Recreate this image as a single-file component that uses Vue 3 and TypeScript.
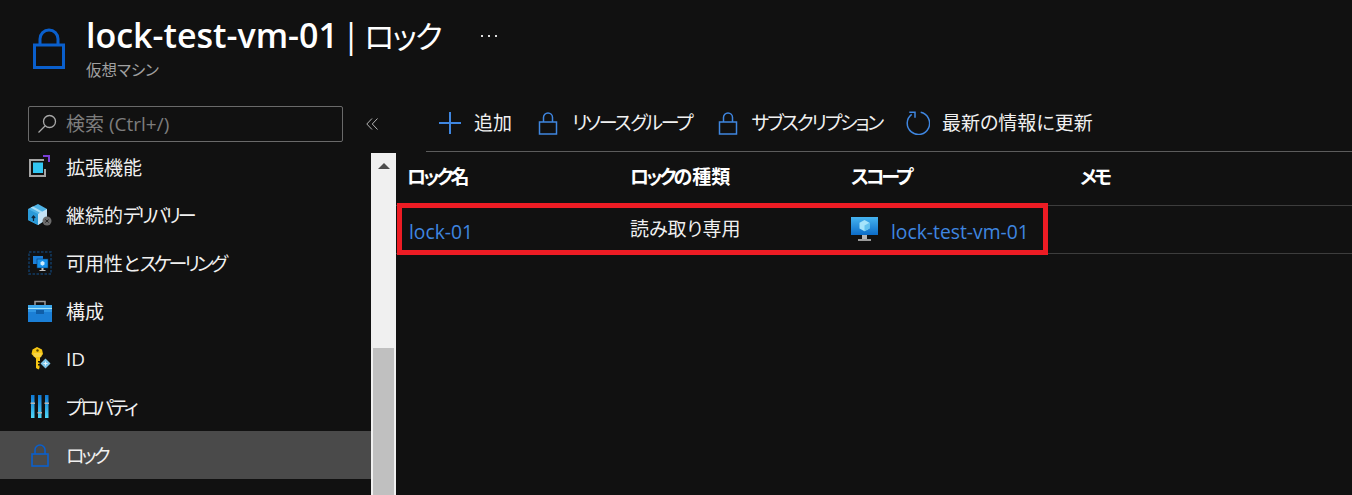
<template>
  <div class="page">
    <header class="head">
      <svg class="head-lock" viewBox="0 0 32 42" fill="none" stroke="#0a5fcc" stroke-width="3">
        <path d="M7 18V12a9 9 0 0 1 18 0v6" />
        <rect x="1.5" y="18" width="29" height="22.5" />
      </svg>
      <div class="head-text">
        <div class="title-row">
          <h1 class="title">lock-test-vm-01 <span class="title-bar">|</span> <span class="title-kana">ロック</span></h1>
          <svg class="more" width="16" height="3" viewBox="0 0 16 3" fill="#ddd">
            <rect x="0" y="1" width="2" height="2" />
            <rect x="7" y="1" width="2" height="2" />
            <rect x="14" y="1" width="2" height="2" />
          </svg>
        </div>
        <div class="subtitle">仮想マシン</div>
      </div>
    </header>

    <div class="body">
      <aside class="side">
        <div class="search-row">
          <div class="search">
            <svg class="search-icon" viewBox="0 0 20 20" fill="none" stroke="#a8a8a8" stroke-width="1.3">
              <circle cx="12.5" cy="7.5" r="6" />
              <path d="M8 12 1.5 18.5" />
            </svg>
            <span>検索 (Ctrl+/)</span>
          </div>
          <svg class="collapse" width="12" height="12" viewBox="0 0 12 12" fill="none" stroke="#b5b5b5" stroke-width="1">
            <path d="M6 .5.8 6 6 11.500M11.500 .5 6.300 6l5.200 5.500" />
          </svg>
        </div>
        <div class="nav-wrap">
          <nav class="nav">
            <a v-for="item in items" :key="item.label" class="nav-item" :class="{ 'is-active': item.active }">
              <span class="nav-icon">
                <svg v-if="item.icon === 'ext'" width="24" height="24" viewBox="0 0 24 24">
                  <path d="M1 4h15v2H3v14h13v-6h2v8H1z" fill="#a5a5a5" />
                  <path d="M15 0h7v7h-2V2h-5z" fill="#7b3fd6" />
                  <rect x="5" y="7.500" width="10" height="10.500" fill="#32c6f2" />
                </svg>
                <svg v-else-if="item.icon === 'pkg'" width="24" height="24" viewBox="0 0 24 24">
                  <path d="M0 6l10-5 9 5v10l-9 6-10-5z" fill="#4fb3e6" />
                  <path d="M0 6l10 5v11l-10-5z" fill="#2a9ad8" />
                  <path d="M5 3.500l9 5v3l-2.500 1v-3l-9-5z" fill="#a8def6" />
                  <path d="M5.500 18v-5M3.800 15 5.500 13l1.700 2" stroke="#10283c" stroke-width="1.200" fill="none" />
                  <path d="M10 11l9-5v10l-9 6z" fill="#c4e2f4" />
                  <circle cx="19" cy="18" r="4.500" fill="#6c6c6c" />
                  <path d="M17.300 16.500l3.400 3M20.700 16.500l-3.400 3" stroke="#222" stroke-width="1" />
                </svg>
                <svg v-else-if="item.icon === 'scale'" width="24" height="24" viewBox="0 0 24 24">
                  <rect x="1" y="1" width="22" height="22" fill="none" stroke="#123c66" stroke-width="1.500" stroke-dasharray="2.500 1.500" />
                  <rect x="5" y="5" width="10" height="8" fill="#1c7fd8" />
                  <rect x="9" y="8" width="11" height="9" fill="#1690ea" stroke="#0b3a66" stroke-width=".6" />
                  <path d="M14.500 10l2 1.200v2.300l-2 1.200-2-1.200v-2.300z" fill="#cfeeff" />
                  <path d="M13.500 17h2v2h2v1h-6v-1h2z" fill="#c4c4c4" />
                </svg>
                <svg v-else-if="item.icon === 'tool'" width="24" height="24" viewBox="0 0 24 24">
                  <path d="M7 6V2.500h10V6" fill="none" stroke="#9a9a9a" stroke-width="1.500" />
                  <rect x="0" y="6" width="24" height="17" fill="#1b7fd6" />
                  <rect x="0" y="6" width="24" height="3" fill="#3ba7ec" />
                  <rect x="0" y="9" width="24" height="1.300" fill="#a5e4f8" />
                  <path d="M0 10.300h24V13H0z" fill="#2f96e4" />
                  <rect x="8" y="11" width="8" height="4" fill="#0f5ea8" />
                </svg>
                <svg v-else-if="item.icon === 'key'" width="24" height="24" viewBox="0 0 24 24">
                  <path d="M9 0l5 2.500 1 4.500-3 4v3h-2v1.500h1.500V17H10v1.500h1.500V21l-1 1.500L8 21V11.500L3.500 7l1-4.500z" fill="#f6c613" />
                  <circle cx="9.500" cy="3.500" r="1.200" fill="#5a4700" />
                  <path d="M5.500 7h8M5.500 9h8" stroke="#fbe98c" stroke-width=".8" />
                  <path d="M17.500 11.500l5 5-5 5-5-5z" fill="#7ec6ea" />
                  <path d="M15.500 16.500h4M17.500 14.500v4" stroke="#e7f7ff" stroke-width="1" />
                </svg>
                <svg v-else-if="item.icon === 'prop'" width="24" height="24" viewBox="0 0 24 24">
                  <defs>
                    <linearGradient id="bar" x1="0" y1="0" x2="0" y2="1">
                      <stop offset="0" stop-color="#0f78d4" />
                      <stop offset="1" stop-color="#4fd8f8" />
                    </linearGradient>
                  </defs>
                  <rect x="3" y="0" width="3.500" height="23" fill="url(#bar)" />
                  <rect x="10" y="0" width="3.500" height="23" fill="url(#bar)" />
                  <rect x="17" y="0" width="3.500" height="23" fill="url(#bar)" />
                  <rect x="2.500" y="7.500" width="4.500" height="1.500" fill="#b5b5b5" />
                  <rect x="9.500" y="17" width="4.500" height="1.500" fill="#b5b5b5" />
                  <rect x="16.500" y="7.500" width="4.500" height="1.500" fill="#b5b5b5" />
                </svg>
                <svg v-else width="24" height="24" viewBox="0 0 24 24" fill="none" stroke="#0a5fcc" stroke-width="1.600">
                  <path d="M7 11V7a5 5 0 0 1 10 0v4" />
                  <rect x="4" y="11" width="16" height="12" />
                </svg>
              </span>
              <span><span v-for="run in runs(item.label)" :key="run.text" :class="{ kana: run.kana }">{{ run.text }}</span></span>
            </a>
          </nav>
          <div class="scrollbar">
            <span class="scroll-up"></span>
            <span class="scroll-thumb"></span>
          </div>
        </div>
      </aside>

      <main class="content">
        <div class="toolbar">
          <button v-for="tool in tools" :key="tool.label" class="tool">
            <svg v-if="tool.icon === 'plus'" class="tool-icon" viewBox="0 0 24 24" stroke="#3f86e0" stroke-width="2" fill="none">
              <path d="M12 1v22M1 12h22" />
            </svg>
            <svg v-else-if="tool.icon === 'lock'" class="tool-icon" viewBox="0 0 24 24" stroke="#3f86e0" stroke-width="1.500" fill="none">
              <path d="M7.500 11V6.500a4.500 4.500 0 0 1 9 0V11" />
              <rect x="3.500" y="11" width="17" height="12" />
            </svg>
            <svg v-else class="tool-icon" viewBox="0 0 24 24" stroke="#3f86e0" stroke-width="1.500" fill="none">
              <path d="M14.700 1.300A11.200 11.200 0 1 1 5.700 3.300" />
              <path d="M3.300 1.300H9v5.400" />
            </svg>
            <span class="tool-label"><span v-for="run in runs(tool.label)" :key="run.text" :class="{ kana: run.kana }">{{ run.text }}</span></span>
          </button>
        </div>

        <div class="table">
          <div class="tr th">
            <span v-for="head in heads" :key="head"><span v-for="run in runs(head)" :key="run.text" :class="{ kana: run.kana }">{{ run.text }}</span></span>
          </div>
          <div class="tr td">
            <a class="link first-link">lock-01</a>
            <span class="lock-type">読み取り専用</span>
            <span class="scope">
              <svg class="vm-icon" width="28" height="28" viewBox="0 0 28 28">
                <defs>
                  <linearGradient id="screen" x1="0" y1="0" x2="0" y2="1">
                    <stop offset="0" stop-color="#46b4f0" />
                    <stop offset="1" stop-color="#0c6cc8" />
                  </linearGradient>
                </defs>
                <rect x="0" y="1" width="27" height="18" fill="url(#screen)" />
                <path d="M13.500 4l5 2.800v5.600l-5 2.800-5-2.800V6.800z" fill="#a5e4fb" />
                <path d="M13.500 9.500l5-2.700v5.600l-5 2.800z" fill="#63c3f0" />
                <rect x="11" y="19" width="5" height="4" fill="#b5b5b5" />
                <rect x="7" y="23" width="13" height="2" fill="#9a9a9a" />
              </svg>
              <a class="link">lock-test-vm-01</a>
            </span>
          </div>
          <div class="highlight"></div>
        </div>
      </main>
    </div>
  </div>
</template>

<script setup lang="ts">
interface NavItem {
  label: string;
  icon: string;
  active?: boolean;
}

const items: NavItem[] = [
  { label: '拡張機能', icon: 'ext' },
  { label: '継続的デリバリー', icon: 'pkg' },
  { label: '可用性とスケーリング', icon: 'scale' },
  { label: '構成', icon: 'tool' },
  { label: 'ID', icon: 'key' },
  { label: 'プロパティ', icon: 'prop' },
  { label: 'ロック', icon: 'lock', active: true },
];

const tools = [
  { label: '追加', icon: 'plus' },
  { label: 'リソース グループ', icon: 'lock' },
  { label: 'サブスクリプション', icon: 'lock' },
  { label: '最新の情報に更新', icon: 'refresh' },
];

const heads = ['ロック名', 'ロックの種類', 'スコープ', 'メモ'];

// katakana is set tighter than kanji, so split labels into runs
function runs(text: string) {
  return (text.match(/[\u30A0-\u30FF]+|[^\u30A0-\u30FF]+/g) ?? []).map((part) => ({
    text: part,
    kana: /^[\u30A0-\u30FF]/.test(part),
  }));
}
</script>

<style>
html,
body {
  margin: 0;
  background: #111;
}
</style>

<style scoped>
.page {
  width: 1352px;
  height: 495px;
  overflow: hidden;
  background: #111;
  color: #f0f0f0;
  font-family: "Open Sans", "Noto Sans CJK JP", sans-serif;
  font-size: 19px;
  font-feature-settings: "palt";
}

.kana {
  letter-spacing: -2.2px;
}

.head {
  display: flex;
  height: 95px;
  padding: 27px 0 0 33px;
  box-sizing: border-box;
}

.head-lock {
  width: 32px;
  height: 42px;
  margin-right: 21px;
  flex: none;
}

.head-text {
  margin-top: -15px;
}

.title-row {
  display: flex;
  align-items: center;
  height: 46px;
}

.title {
  margin: 0;
  font-size: 34px;
  font-weight: 600;
  line-height: 46px;
  word-spacing: -5px;
  color: #fff;
  white-space: nowrap;
}

.title-bar {
  font-weight: 400;
}

.title-kana {
  font-size: 31px;
  font-weight: 400;
  letter-spacing: -2px;
}

.more {
  margin-left: 40px;
}

.subtitle {
  margin-top: 2px;
  font-size: 15.5px;
  line-height: 20px;
  color: #a0a0a0;
}

.body {
  display: flex;
  height: 400px;
}

.side {
  width: 396px;
  flex: none;
  display: flex;
  flex-direction: column;
}

.search-row {
  display: flex;
  align-items: center;
  height: 58px;
  padding: 0 0 0 28px;
  box-sizing: border-box;
  flex: none;
}

.search {
  display: flex;
  align-items: center;
  gap: 9px;
  width: 315px;
  height: 36px;
  padding-left: 8px;
  box-sizing: border-box;
  border: 1px solid #6a6a6a;
  border-radius: 2px;
  color: #7d7d7d;
  line-height: 32px;
}

.search-icon {
  width: 20px;
  height: 20px;
}

.collapse {
  margin-left: 23px;
}

.nav-wrap {
  display: flex;
  flex: 1;
  min-height: 0;
}

.nav {
  width: 371px;
  flex: none;
  margin-top: -10px;
}

.nav-item {
  display: flex;
  align-items: center;
  height: 48px;
  padding-left: 28px;
  color: #f0f0f0;
  white-space: nowrap;
}

.nav-item .kana {
  letter-spacing: -3px;
}

.nav-item.is-active {
  background: #4a4a4a;
}

.nav-icon {
  width: 24px;
  height: 24px;
  margin-right: 14px;
  flex: none;
}

.scrollbar {
  width: 25px;
  flex: none;
  background: #f0f0f0;
}

.scroll-up {
  display: block;
  width: 0;
  height: 0;
  margin: 10px auto 0;
  border-left: 6px solid transparent;
  border-right: 6px solid transparent;
  border-bottom: 6px solid #4d4d4d;
}

.scroll-thumb {
  display: block;
  height: 147px;
  margin: 179px 2px 0;
  background: #c0c0c0;
}

.content {
  flex: 1;
  min-width: 0;
}

.toolbar {
  display: flex;
  align-items: center;
  gap: 24px;
  height: 56px;
  margin-left: 30px;
  padding-left: 12px;
  border-bottom: 1px solid #5c5c5c;
}

.tool {
  display: flex;
  align-items: center;
  gap: 12px;
  padding: 0;
  border: 0;
  background: none;
  color: #f0f0f0;
  font: inherit;
  font-feature-settings: "palt";
  white-space: nowrap;
}

.tool-label {
  margin-top: -2px;
  word-spacing: -4px;
}

.tool-icon {
  width: 24px;
  height: 24px;
}

.table {
  position: relative;
}

.tr {
  display: grid;
  grid-template-columns: 223px 221px 229px 1fr;
  padding-left: 11px;
  align-items: center;
  border-bottom: 1px solid #3d3d3d;
}

.th {
  height: 54px;
  padding-bottom: 6px;
  box-sizing: border-box;
  font-weight: 700;
  color: #fff;
}

.th .kana {
  letter-spacing: -3px;
}

.td {
  height: 48px;
  box-sizing: border-box;
}

.first-link {
  margin: 3px 0 0 2px;
}

.lock-type {
  margin-top: -3px;
}

.scope {
  display: flex;
  align-items: center;
  gap: 12px;
}

.scope .link {
  margin-top: 3px;
}

.link {
  color: #3f86e0;
  font-size: 19.3px;
}

.highlight {
  position: absolute;
  left: 1px;
  top: 51px;
  width: 651px;
  height: 52px;
  box-sizing: border-box;
  border: 5px solid #ed1c24;
}
</style>
